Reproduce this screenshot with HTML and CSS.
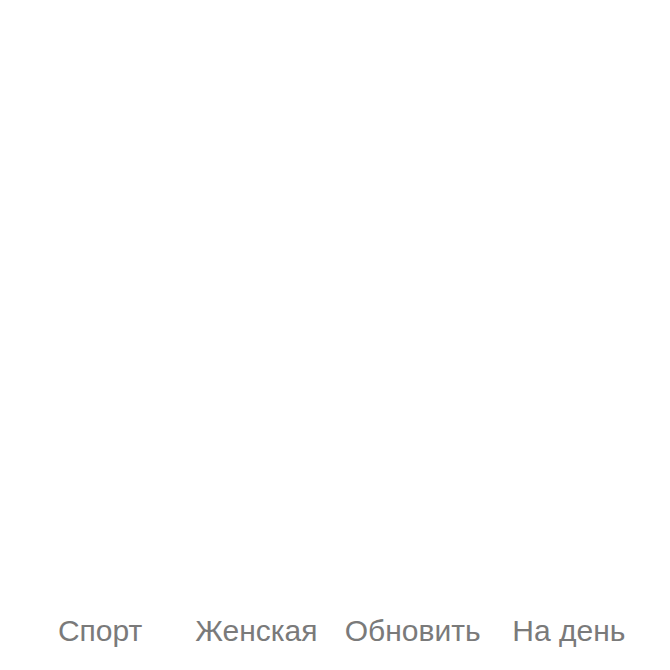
FILE: index.html
```html
<!DOCTYPE html>
<html lang="ru">
<head>
<meta charset="utf-8">
<link rel="stylesheet" href="styles.css">
</head>
<body>
<div class="page">
  <main class="content"></main>
  <nav class="tabs">
    <span class="tab">Спорт</span>
    <span class="tab">Женская</span>
    <span class="tab">Обновить</span>
    <span class="tab">На день</span>
  </nav>
</div>
</body>
</html>
```
FILE: styles.css
```css
html, body {
  margin: 0;
  padding: 0;
  background: #ffffff;
}
.page {
  width: 670px;
  height: 670px;
  display: flex;
  flex-direction: column;
}
.content {
  flex: 1;
}
.tabs {
  display: grid;
  grid-template-columns: repeat(4, 1fr);
  padding: 0 23px 22px 22px;
  font-family: "Liberation Sans", Arial, sans-serif;
  font-size: 30px;
  line-height: 34px;
  color: #7a7a7a;
}
.tab {
  text-align: center;
}
```
